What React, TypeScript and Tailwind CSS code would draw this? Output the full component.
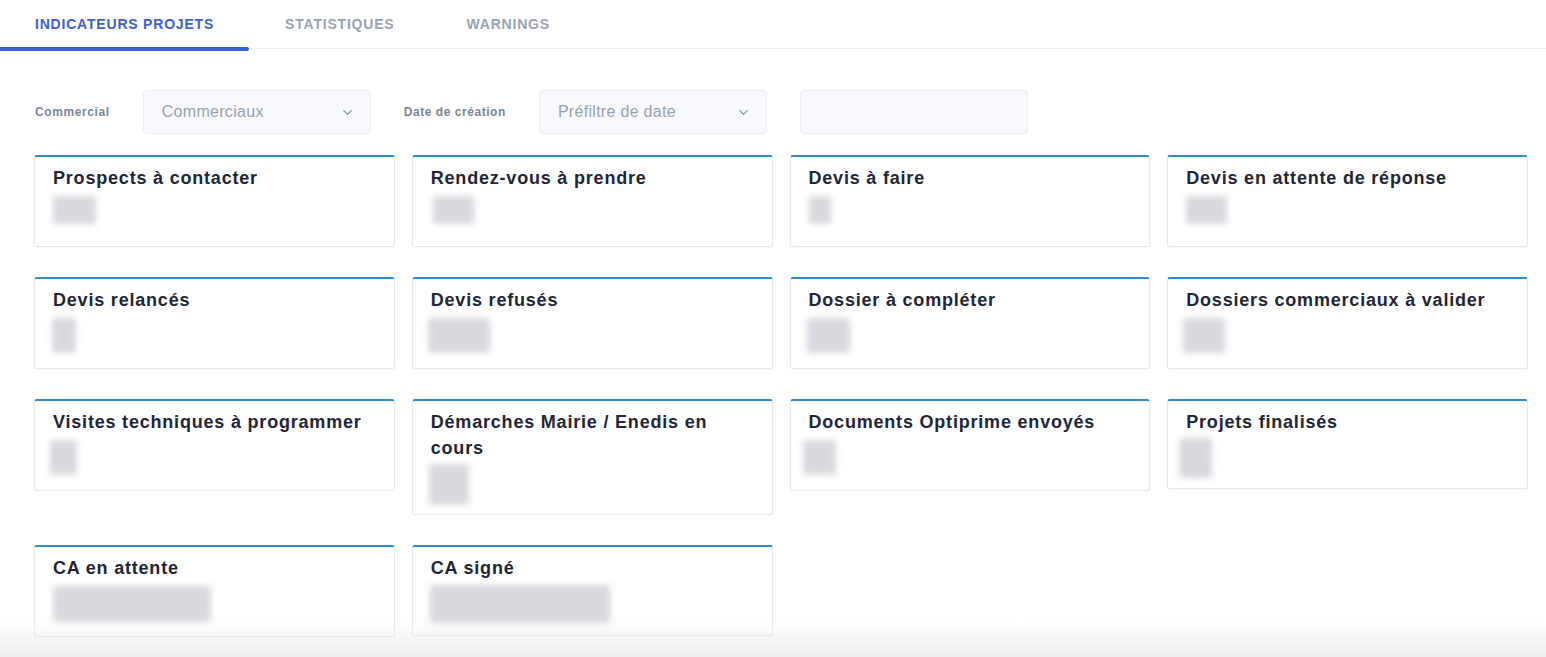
import { ChevronDown } from 'lucide-react';

type Blur = { w: number; h: number; dy: number; dx: number };
type Card = { title: string; blur: Blur };

const rows: Card[][] = [
  [
    { title: 'Prospects à contacter', blur: { w: 43, h: 28, dy: 5, dx: 0 } },
    { title: 'Rendez-vous à prendre', blur: { w: 41, h: 28, dy: 5, dx: 2 } },
    { title: 'Devis à faire', blur: { w: 22, h: 28, dy: 5, dx: 0 } },
    { title: 'Devis en attente de réponse', blur: { w: 41, h: 28, dy: 5, dx: 0 } },
  ],
  [
    { title: 'Devis relancés', blur: { w: 24, h: 35, dy: 0, dx: -1 } },
    { title: 'Devis refusés', blur: { w: 62, h: 35, dy: 0, dx: -3 } },
    { title: 'Dossier à compléter', blur: { w: 43, h: 35, dy: 0, dx: -2 } },
    { title: 'Dossiers commerciaux à valider', blur: { w: 42, h: 35, dy: 0, dx: -3 } },
  ],
  [
    { title: 'Visites techniques à programmer', blur: { w: 27, h: 35, dy: 1, dx: -3 } },
    { title: 'Démarches Mairie / Enedis en cours', blur: { w: 40, h: 41, dy: -2, dx: -2 } },
    { title: 'Documents Optiprime envoyés', blur: { w: 33, h: 35, dy: 1, dx: -6 } },
    { title: 'Projets finalisés', blur: { w: 33, h: 40, dy: -2, dx: -7 } },
  ],
  [
    { title: 'CA en attente', blur: { w: 158, h: 36, dy: 1, dx: 0 } },
    { title: 'CA signé', blur: { w: 180, h: 38, dy: -1, dx: -1 } },
  ],
];

function IndicatorCard({ card }: { card: Card }) {
  const b = card.blur;
  return (
    <div className="rounded-[3px] border border-t-2 border-[#e6e8ec] border-t-[#2b8ccf] bg-white px-[18px] pb-[14px] pt-[8px] shadow-[0_1px_2px_rgba(0,0,0,0.03)]">
      <h3 className="text-[18px] font-bold leading-[26px] tracking-[0.8px] text-[#1e2638]">{card.title}</h3>
      <div className="mt-[5px] h-[36px]">
        <div
          className="rounded-[2px] bg-[#d8d9de] blur-[3px]"
          style={{ width: b.w, height: b.h, marginTop: b.dy, marginLeft: b.dx }}
        />
      </div>
    </div>
  );
}

function Select({ placeholder }: { placeholder: string }) {
  return (
    <div className="flex h-[44px] w-[228px] items-center justify-between rounded-[4px] border border-[#eceef2] bg-[#f8f9fc] pl-[18px] pr-[15px] text-[16px] tracking-[0.3px] text-[#9aa1ad]">
      <span>{placeholder}</span>
      <ChevronDown size={15} strokeWidth={2.2} className="text-[#8d95a3]" />
    </div>
  );
}

export default function App() {
  return (
    <div className="relative min-h-[657px] bg-white font-['Liberation_Sans',Arial,sans-serif]">
      <nav className="flex border-b border-[#eceef1]">
        <div className="relative flex h-[48px] items-center px-[35px] text-[14px] font-bold tracking-[0.8px] text-[#3d5fd6]">
          INDICATEURS PROJETS
          <span className="absolute -bottom-[3px] left-0 right-0 h-[4px] rounded-r-full bg-[#3a5bd9]" />
        </div>
        <div className="flex h-[48px] items-center px-[36px] text-[14px] font-bold tracking-[0.8px] text-[#9ba3b1]">STATISTIQUES</div>
        <div className="flex h-[48px] items-center px-[36px] text-[14px] font-bold tracking-[0.8px] text-[#9ba3b1]">WARNINGS</div>
      </nav>

      <div className="pl-[34px] pr-[18px]">
        <div className="mt-[41px] flex items-center gap-[33px]">
          <span className="pl-[1px] text-[12px] font-bold tracking-[0.6px] text-[#7d8595]">Commercial</span>
          <Select placeholder="Commerciaux" />
          <span className="text-[12px] font-bold tracking-[0.55px] text-[#7d8595]">Date de création</span>
          <Select placeholder="Préfiltre de date" />
          <div className="h-[44px] w-[228px] rounded-[4px] border border-[#eceef2] bg-[#f8f9fc]" />
        </div>

        <div className="mt-[21px] flex flex-col gap-y-[30px] pb-[20px]">
          {rows.map((row, i) => (
            <div key={i} className="grid grid-cols-4 items-start gap-x-[17px]">
              {row.map((card) => (
                <IndicatorCard key={card.title} card={card} />
              ))}
            </div>
          ))}
        </div>
      </div>

      <div className="pointer-events-none fixed bottom-0 left-0 right-0 h-[38px] bg-linear-to-b from-white/0 to-[#efefef]" />
    </div>
  );
}
